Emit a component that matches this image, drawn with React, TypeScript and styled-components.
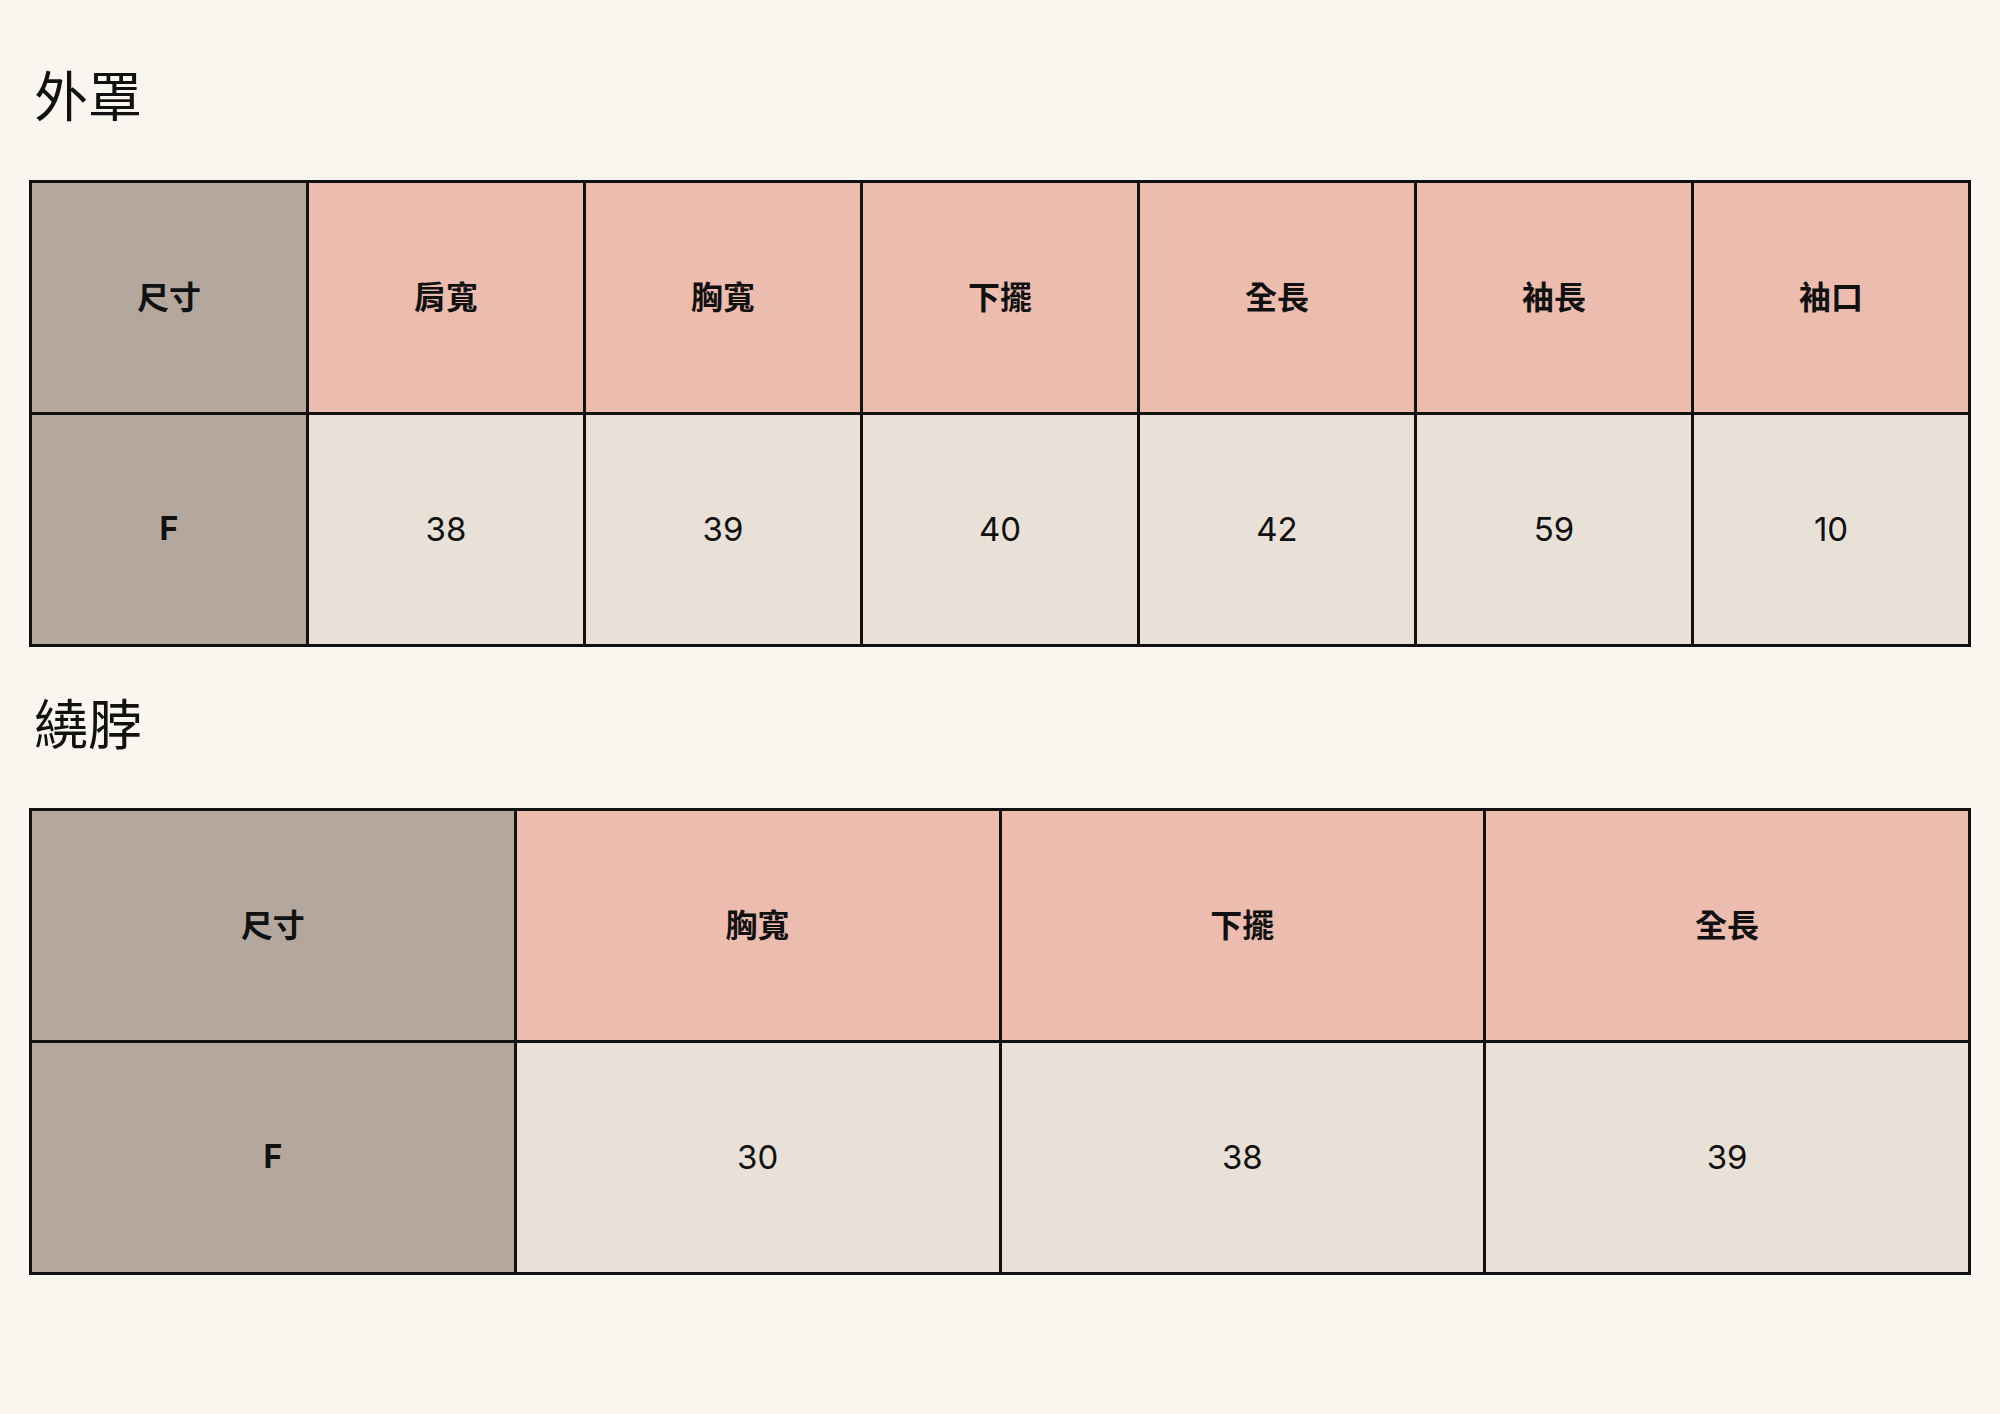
import React from "react";
import styled, { createGlobalStyle } from "styled-components";

const GlobalStyle = createGlobalStyle`
  html, body {
    margin: 0;
    padding: 0;
    background: #f9f6f0;
  }
  body {
    font-family: Inter, "Noto Sans CJK TC", sans-serif;
    color: #111;
  }
`;

const Page = styled.div`
  padding: 66px 29px 40px;
  display: flex;
  flex-direction: column;
`;

const Section = styled.section`
  display: flex;
  flex-direction: column;
  & + & {
    margin-top: 47px;
  }
`;

const Title = styled.h2`
  margin: 0 0 59px 5px;
  font-family: "Noto Sans CJK TC", sans-serif;
  font-weight: 400;
  font-size: 54px;
  line-height: 55px;
  color: #111;
`;

const Table = styled.table`
  width: 100%;
  border-collapse: collapse;
  table-layout: fixed;
  border: 3px solid #111;
`;

type CellKind = "size" | "head" | "data";

const Cell = styled.td<{ $kind: CellKind; $row: "head" | "body" }>`
  height: 232px;
  padding: 0 0 ${(p) => (p.$row === "head" ? "6px" : "2px")};
  box-sizing: border-box;
  border: 3px solid #111;
  text-align: center;
  vertical-align: middle;
  font-size: ${(p) => (p.$kind === "data" ? "33px" : "32px")};
  font-family: Inter, "Noto Sans CJK TC", sans-serif;
  font-weight: ${(p) => (p.$kind === "data" ? 400 : 700)};
  background: ${(p) =>
    p.$kind === "size" ? "#b4a79e" : p.$kind === "head" ? "#ecbcaf" : "#e9e1d7"};
  color: #111;
`;

type SizeTable = {
  title: string;
  columns: string[];
  values: string[];
};

const data: SizeTable[] = [
  {
    title: "外罩",
    columns: ["肩寬", "胸寬", "下擺", "全長", "袖長", "袖口"],
    values: ["38", "39", "40", "42", "59", "10"],
  },
  {
    title: "繞脖",
    columns: ["胸寬", "下擺", "全長"],
    values: ["30", "38", "39"],
  },
];

export default function App() {
  return (
    <>
      <GlobalStyle />
      <Page>
        {data.map((t) => (
          <Section key={t.title}>
            <Title>{t.title}</Title>
            <Table>
              <tbody>
                <tr>
                  <Cell $kind="size" $row="head">
                    尺寸
                  </Cell>
                  {t.columns.map((c) => (
                    <Cell key={c} $kind="head" $row="head">
                      {c}
                    </Cell>
                  ))}
                </tr>
                <tr>
                  <Cell $kind="size" $row="body">
                    F
                  </Cell>
                  {t.values.map((v, i) => (
                    <Cell key={i} $kind="data" $row="body">
                      {v}
                    </Cell>
                  ))}
                </tr>
              </tbody>
            </Table>
          </Section>
        ))}
      </Page>
    </>
  );
}
